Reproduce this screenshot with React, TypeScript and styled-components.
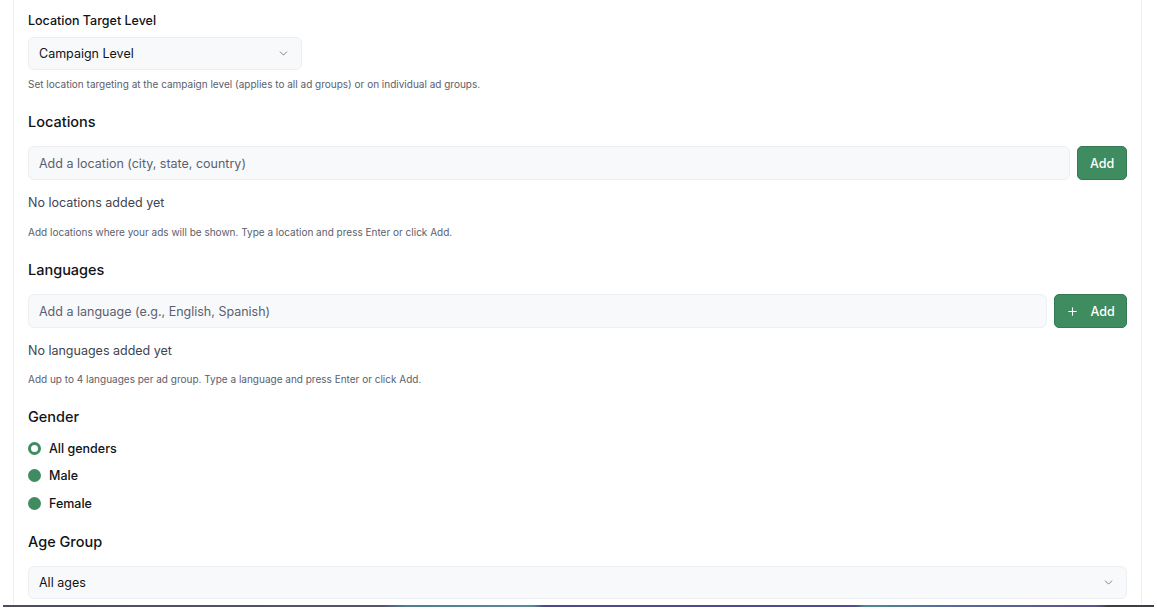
import React from "react";
import styled, { createGlobalStyle } from "styled-components";
import { ChevronDown, Plus } from "lucide-react";

const Global = createGlobalStyle`
  html, body { margin: 0; padding: 0; background: #ffffff; }
  body { font-family: Inter, "Noto Sans", "Liberation Sans", sans-serif; color: #111318; -webkit-font-smoothing: antialiased; }
  * { box-sizing: border-box; }
`;

const Page = styled.div`
  width: 1157px;
  height: 615px;
  overflow: hidden;
  background: #ffffff;
  display: flex;
  flex-direction: column;
`;

const Panel = styled.div`
  margin: 0 15px 0 13px;
  height: 605px;
  border-left: 1px solid #eff0f4;
  border-right: 1px solid #eff0f4;
  padding: 12px 14px 0 14px;
  display: flex;
  flex-direction: column;
  gap: 19px;
`;

const Strip = styled.div`
  height: 2px;
  margin: 0 3px;
  background: linear-gradient(
    90deg,
    #4b4c5c 0%,
    #55566a 33%,
    #4f7e8e 35%,
    #5c8a96 46%,
    #4c4a84 47%,
    #4f4d8a 74%,
    #4e8a8f 75%,
    #5a6a9a 82%,
    #5a5488 95%,
    #3d3d44 96%,
    #3d3d44 100%
  );
`;

const Section = styled.section`
  display: flex;
  flex-direction: column;
`;

const Label = styled.div`
  font-size: 12.5px;
  line-height: 18px;
  font-weight: 500;
  color: #111318;
  margin-bottom: 7px;
`;

const Heading = styled.h3<{ $mb: number }>`
  margin: 0 0 ${(p) => p.$mb}px;
  font-size: 14.5px;
  line-height: 22px;
  font-weight: 500;
  color: #111318;
`;

const SelectBox = styled.div<{ $width?: string }>`
  width: ${(p) => p.$width || "100%"};
  height: 33px;
  background: #f8f9fb;
  border: 1px solid #eceef2;
  border-radius: 6px;
  display: flex;
  align-items: center;
  justify-content: space-between;
  padding: 0 11px 0 10px;
  font-size: 12.5px;
  color: #111318;
  svg { color: #6b7280; }
`;

const Help = styled.p<{ $mt: number }>`
  margin: ${(p) => p.$mt}px 0 0;
  font-size: 10px;
  line-height: 16px;
  color: #5b606b;
`;

const Row = styled.div`
  display: flex;
  gap: 7px;
  height: 34px;
`;

const Input = styled.input`
  flex: 1;
  height: 34px;
  background: #f8f9fb;
  border: 1px solid #eceef2;
  border-radius: 6px;
  padding: 0 10px;
  font-family: inherit;
  font-size: 12.5px;
  color: #111318;
  outline: none;
  &::placeholder { color: #5a6070; }
`;

const AddButton = styled.button<{ $w: number }>`
  width: ${(p) => p.$w}px;
  height: 34px;
  background: #3e8c60;
  border: 1px solid #357a53;
  border-radius: 5px;
  color: #ffffff;
  font-family: inherit;
  font-size: 12.5px;
  font-weight: 500;
  display: flex;
  align-items: center;
  justify-content: center;
  gap: 11px;
  padding: 0;
`;

const Empty = styled.div`
  margin-top: 14px;
  font-size: 12.5px;
  line-height: 18px;
  color: #3f4450;
`;

const RadioList = styled.div`
  display: flex;
  flex-direction: column;
  gap: 9.5px;
`;

const RadioRow = styled.label`
  display: flex;
  align-items: center;
  gap: 8px;
  height: 18px;
  font-size: 12.5px;
  font-weight: 500;
  color: #111318;
`;

const Dot = styled.span<{ $ring?: boolean }>`
  width: 13px;
  height: 13px;
  border-radius: 50%;
  background: ${(p) => (p.$ring ? "#ffffff" : "#3e8c60")};
  border: ${(p) => (p.$ring ? "3px solid #3e8c60" : "none")};
  flex-shrink: 0;
`;

export default function App() {
  return (
    <Page>
      <Global />
      <Panel>
        <Section>
          <Label>Location Target Level</Label>
          <SelectBox $width="274px">
            <span>Campaign Level</span>
            <ChevronDown size={13} strokeWidth={1.6} />
          </SelectBox>
          <Help $mt={6}>
            Set location targeting at the campaign level (applies to all ad groups) or on individual ad groups.
          </Help>
        </Section>

        <Section>
          <Heading $mb={13}>Locations</Heading>
          <Row>
            <Input placeholder="Add a location (city, state, country)" />
            <AddButton $w={50}>Add</AddButton>
          </Row>
          <Empty>No locations added yet</Empty>
          <Help $mt={12}>
            Add locations where your ads will be shown. Type a location and press Enter or click Add.
          </Help>
        </Section>

        <Section>
          <Heading $mb={13}>Languages</Heading>
          <Row>
            <Input placeholder="Add a language (e.g., English, Spanish)" />
            <AddButton $w={73}>
              <Plus size={13} strokeWidth={2} />
              <span>Add</span>
            </AddButton>
          </Row>
          <Empty>No languages added yet</Empty>
          <Help $mt={11}>
            Add up to 4 languages per ad group. Type a language and press Enter or click Add.
          </Help>
        </Section>

        <Section>
          <Heading $mb={11}>Gender</Heading>
          <RadioList>
            <RadioRow>
              <Dot $ring />
              All genders
            </RadioRow>
            <RadioRow>
              <Dot />
              Male
            </RadioRow>
            <RadioRow>
              <Dot />
              Female
            </RadioRow>
          </RadioList>
        </Section>

        <Section>
          <Heading $mb={13}>Age Group</Heading>
          <SelectBox>
            <span>All ages</span>
            <ChevronDown size={13} strokeWidth={1.6} />
          </SelectBox>
        </Section>
      </Panel>
      <Strip />
    </Page>
  );
}
